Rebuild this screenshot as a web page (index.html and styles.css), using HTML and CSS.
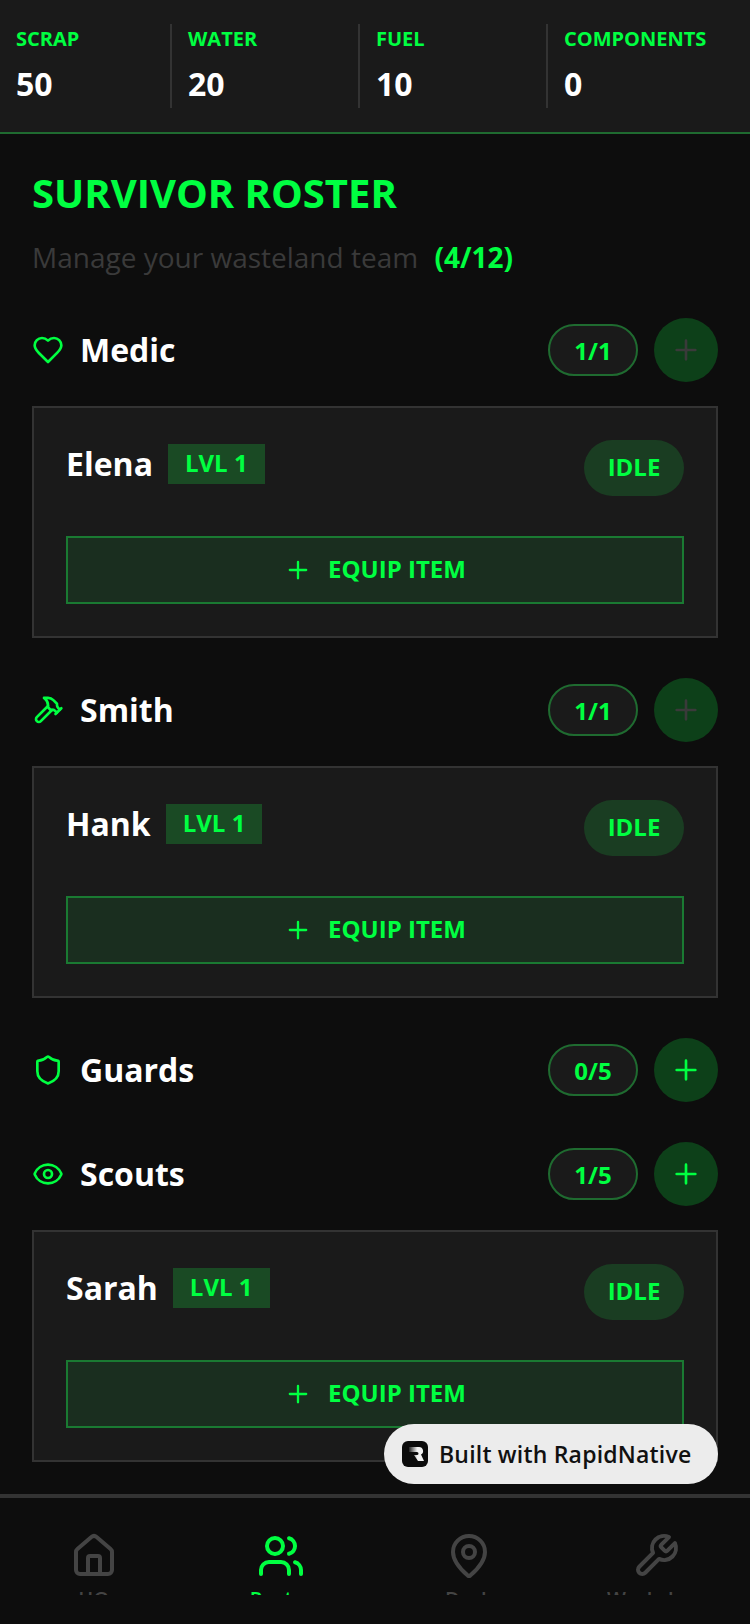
FILE: index.html
```html
<!DOCTYPE html>
<html lang="en">
<head>
  <meta charset="UTF-8" />
  <meta name="viewport" content="width=device-width, initial-scale=1.0" />
  <title>Survivor Roster</title>
  <link rel="stylesheet" href="styles.css">
</head>
<body>
  <div class="screen">
    <div class="resources">
      <div class="resource"><div class="resource-label">SCRAP</div><div class="resource-value">50</div></div>
      <div class="resource"><div class="resource-label">WATER</div><div class="resource-value">20</div></div>
      <div class="resource"><div class="resource-label">FUEL</div><div class="resource-value">10</div></div>
      <div class="resource"><div class="resource-label">COMPONENTS</div><div class="resource-value">0</div></div>
    </div>

    <div class="content">
      <h1 class="title">SURVIVOR ROSTER</h1>
      <p class="subtitle">Manage your wasteland team <span class="count">(4/12)</span></p>

      <div class="role">
        <div class="role-name">
          <svg class="role-icon" viewBox="0 0 24 24"><path d="M19 14c1.49-1.46 3-3.21 3-5.5A5.5 5.5 0 0 0 16.5 3c-1.76 0-3 .5-4.5 2-1.5-1.5-2.74-2-4.5-2A5.5 5.5 0 0 0 2 8.5c0 2.3 1.5 4.05 3 5.5l7 7Z"/></svg>
          <span>Medic</span>
        </div>
        <div class="role-actions">
          <span class="slots">1/1</span>
          <span class="add-btn full"><svg viewBox="0 0 24 24"><path d="M5 12h14M12 5v14"/></svg></span>
        </div>
      </div>
      <div class="card">
        <div class="card-top">
          <div class="card-name"><span class="person">Elena</span><span class="level">LVL 1</span></div>
          <span class="status">IDLE</span>
        </div>
        <div class="equip"><svg viewBox="0 0 24 24"><path d="M5 12h14M12 5v14"/></svg><span>EQUIP ITEM</span></div>
      </div>

      <div class="role">
        <div class="role-name">
          <svg class="role-icon" viewBox="0 0 24 24"><path d="m15 12-8.37 8.37a2.12 2.12 0 1 1-3-3L12 9"/><path d="M17.64 15 22 10.64"/><path d="m20.91 11.7-1.25-1.25c-.6-.6-.93-1.4-.93-2.25v-.86L16.01 4.6a5.56 5.56 0 0 0-3.94-1.64H9l.92.82A6.18 6.18 0 0 1 12 8.4v1.56l2 2h2.47l2.26 1.91"/></svg>
          <span>Smith</span>
        </div>
        <div class="role-actions">
          <span class="slots">1/1</span>
          <span class="add-btn full"><svg viewBox="0 0 24 24"><path d="M5 12h14M12 5v14"/></svg></span>
        </div>
      </div>
      <div class="card">
        <div class="card-top">
          <div class="card-name"><span class="person">Hank</span><span class="level">LVL 1</span></div>
          <span class="status">IDLE</span>
        </div>
        <div class="equip"><svg viewBox="0 0 24 24"><path d="M5 12h14M12 5v14"/></svg><span>EQUIP ITEM</span></div>
      </div>

      <div class="role">
        <div class="role-name">
          <svg class="role-icon" viewBox="0 0 24 24"><path d="M20 13c0 5-3.5 7.5-7.66 8.95a1 1 0 0 1-.67-.01C7.5 20.5 4 18 4 13V6a1 1 0 0 1 1-1c2 0 4.5-1.2 6.24-2.72a1.17 1.17 0 0 1 1.52 0C14.51 3.81 17 5 19 5a1 1 0 0 1 1 1z"/></svg>
          <span>Guards</span>
        </div>
        <div class="role-actions">
          <span class="slots">0/5</span>
          <span class="add-btn"><svg viewBox="0 0 24 24"><path d="M5 12h14M12 5v14"/></svg></span>
        </div>
      </div>

      <div class="role">
        <div class="role-name">
          <svg class="role-icon" viewBox="0 0 24 24"><path d="M2.06 12.35a1 1 0 0 1 0-.7 10.75 10.75 0 0 1 19.88 0 1 1 0 0 1 0 .7 10.75 10.75 0 0 1-19.88 0"/><circle cx="12" cy="12" r="3"/></svg>
          <span>Scouts</span>
        </div>
        <div class="role-actions">
          <span class="slots">1/5</span>
          <span class="add-btn"><svg viewBox="0 0 24 24"><path d="M5 12h14M12 5v14"/></svg></span>
        </div>
      </div>
      <div class="card">
        <div class="card-top">
          <div class="card-name"><span class="person">Sarah</span><span class="level">LVL 1</span></div>
          <span class="status">IDLE</span>
        </div>
        <div class="equip"><svg viewBox="0 0 24 24"><path d="M5 12h14M12 5v14"/></svg><span>EQUIP ITEM</span></div>
      </div>
    </div>

    <div class="built-with">
      <svg class="built-logo" viewBox="0 0 26 26">
        <defs><linearGradient id="logoFade" x1="0" x2="1" y1="0" y2="0"><stop offset="0" stop-color="#222"/><stop offset="0.55" stop-color="#f2f2f2"/></linearGradient></defs>
        <rect width="26" height="26" rx="6" fill="#0c0c0c"/>
        <path d="M7 6h10a4 4 0 0 1 2 7.5L22 20h-6l-4-6h3a1.2 1.2 0 0 0 0-3H7z" fill="url(#logoFade)"/>
      </svg>
      <span>Built with RapidNative</span>
    </div>

    <nav class="tabs">
      <div class="tab">
        <svg viewBox="0 0 24 24"><path d="M15 21v-8a1 1 0 0 0-1-1h-4a1 1 0 0 0-1 1v8"/><path d="M3 10a2 2 0 0 1 .71-1.53l7-6a2 2 0 0 1 2.58 0l7 6A2 2 0 0 1 21 10v9a2 2 0 0 1-2 2H5a2 2 0 0 1-2-2z"/></svg>
        <span class="tab-label">HQ</span>
      </div>
      <div class="tab active">
        <svg viewBox="0 0 24 24"><path d="M16 21v-2a4 4 0 0 0-4-4H6a4 4 0 0 0-4 4v2"/><path d="M16 3.13a4 4 0 0 1 0 7.75"/><path d="M22 21v-2a4 4 0 0 0-3-3.87"/><circle cx="9" cy="7" r="4"/></svg>
        <span class="tab-label">Roster</span>
      </div>
      <div class="tab">
        <svg viewBox="0 0 24 24"><path d="M20 10c0 4.99-5.54 10.19-7.4 11.8a1 1 0 0 1-1.2 0C9.54 20.19 4 14.99 4 10a8 8 0 0 1 16 0"/><circle cx="12" cy="10" r="3"/></svg>
        <span class="tab-label">Deck</span>
      </div>
      <div class="tab">
        <svg viewBox="0 0 24 24"><path d="M14.7 6.3a1 1 0 0 0 0 1.4l1.6 1.6a1 1 0 0 0 1.4 0l3.77-3.77a6 6 0 0 1-7.94 7.94l-6.91 6.91a2.12 2.12 0 0 1-3-3l6.91-6.91a6 6 0 0 1 7.94-7.94z"/></svg>
        <span class="tab-label">Workshop</span>
      </div>
    </nav>
  </div>
</body>
</html>
```

FILE: styles.css
```css
html, body {
  margin: 0;
  padding: 0;
}
body {
  font-family: "Open Sans", "Noto Sans", sans-serif;
  background: #0d0d0d;
  color: #fff;
}
svg {
  fill: none;
  stroke: currentColor;
  stroke-width: 2;
  stroke-linecap: round;
  stroke-linejoin: round;
}
.screen {
  position: relative;
  width: 750px;
  height: 1624px;
  overflow: hidden;
  display: flex;
  flex-direction: column;
}

/* resource bar */
.resources {
  display: grid;
  grid-template-columns: 156px 188px 188px 1fr;
  height: 108px;
  padding: 24px 16px 0;
  background: #1a1a1a;
  border-bottom: 2px solid #1f6b30;
}
.resource {
  height: 84px;
  border-right: 2px solid #333;
  padding-left: 16px;
  box-sizing: border-box;
}
.resource:first-child {
  padding-left: 0;
}
.resource:last-child {
  border-right: none;
}
.resource-label {
  font-size: 20px;
  line-height: 30px;
  font-weight: 700;
  color: #00ff41;
}
.resource-value {
  font-size: 32px;
  line-height: 44px;
  font-weight: 700;
  margin-top: 8px;
}

/* main */
.content {
  flex: 1;
  padding: 0 32px;
}
.title {
  margin: 33px 0 0;
  font-size: 40px;
  line-height: 52px;
  font-weight: 700;
  color: #00ff41;
}
.subtitle {
  margin: 18px 0 0;
  padding-bottom: 1px;
  font-size: 28px;
  line-height: 40px;
  color: #3a3a3a;
}
.count {
  margin-left: 9px;
  font-weight: 700;
  color: #00ff41;
}
.role {
  display: flex;
  justify-content: space-between;
  align-items: center;
  height: 64px;
  margin-top: 40px;
}
.role-name {
  display: flex;
  align-items: center;
  gap: 16px;
  font-size: 32px;
  font-weight: 700;
}
.role-name span {
  padding-bottom: 2px;
}
.role-icon {
  width: 32px;
  height: 32px;
  color: #00ff41;
}
.role-actions {
  display: flex;
  align-items: center;
  gap: 16px;
}
.slots {
  width: 90px;
  height: 52px;
  box-sizing: border-box;
  display: flex;
  align-items: center;
  justify-content: center;
  border: 2px solid #1f6b30;
  border-radius: 26px;
  background: #1a1a1a;
  color: #00ff41;
  font-size: 24px;
  font-weight: 700;
}
.add-btn {
  width: 64px;
  height: 64px;
  border-radius: 50%;
  background: #0d4019;
  color: #00ff41;
  display: flex;
  align-items: center;
  justify-content: center;
}
.add-btn.full {
  color: #3a3a3a;
}
.add-btn svg {
  width: 32px;
  height: 32px;
}
.card {
  margin-top: 24px;
  padding: 32px;
  background: #1a1a1a;
  border: 2px solid #333;
  height: 232px;
  box-sizing: border-box;
}
.card-top {
  display: flex;
  justify-content: space-between;
  align-items: flex-start;
}
.card-name {
  display: flex;
  align-items: center;
  gap: 15px;
  margin-top: 4px;
  font-size: 32px;
  font-weight: 700;
  height: 40px;
}
.person {
  padding-bottom: 2px;
}
.level {
  background: #1a4a24;
  color: #00ff41;
  font-size: 24px;
  font-weight: 700;
  padding: 0 17px;
  height: 40px;
  line-height: 38px;
}
.status {
  width: 100px;
  height: 56px;
  box-sizing: border-box;
  padding-bottom: 3px;
  border-radius: 28px;
  background: #1a3d22;
  color: #00ff41;
  font-size: 24px;
  font-weight: 700;
  display: flex;
  align-items: center;
  justify-content: center;
}
.equip {
  margin-top: 40px;
  height: 68px;
  box-sizing: border-box;
  border: 2px solid #1a7a32;
  background: #1a2e1f;
  color: #00ff41;
  display: flex;
  align-items: center;
  justify-content: center;
  gap: 16px;
  font-size: 24px;
  font-weight: 700;
}
.equip span {
  padding-bottom: 3px;
}
.equip svg {
  width: 28px;
  height: 28px;
}

/* badge over the list */
.built-with {
  position: absolute;
  left: 384px;
  top: 1424px;
  width: 334px;
  height: 60px;
  box-sizing: border-box;
  padding-left: 18px;
  display: flex;
  align-items: center;
  gap: 11px;
  border-radius: 30px;
  background: #ececec;
  color: #111;
  font-size: 23px;
  font-weight: 600;
  letter-spacing: 0.2px;
}
.built-logo {
  width: 26px;
  height: 26px;
  stroke: none;
}

/* bottom tabs */
.tabs {
  display: flex;
  justify-content: space-around;
  height: 126px;
  border-top: 4px solid #333;
  background: #0d0d0d;
}
.tab {
  width: 188px;
  display: flex;
  flex-direction: column;
  align-items: center;
  padding-top: 34px;
  color: #444;
}
.tab svg {
  width: 48px;
  height: 48px;
}
.tab-label {
  display: block;
  height: 3px;
  overflow: hidden;
  margin-top: 12px;
  font-size: 20px;
  line-height: 14px;
  font-weight: 600;
}
.tab.active {
  color: #00ff41;
}
```
